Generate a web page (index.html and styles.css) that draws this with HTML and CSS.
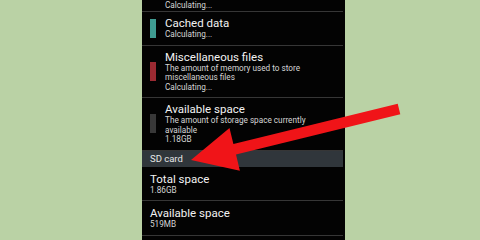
FILE: index.html
```html
<!DOCTYPE html>
<html>
<head>
<meta charset="utf-8">
<link rel="stylesheet" href="styles.css">
</head>
<body>
<div class="page">
  <div class="screen">
    <div class="list">
      <div class="row row-partial">
        <span class="swatch swatch-none"></span>
        <div class="text">
          <div class="desc">Calculating...</div>
        </div>
      </div>
      <div class="row">
        <span class="swatch swatch-teal"></span>
        <div class="text">
          <div class="title">Cached data</div>
          <div class="desc">Calculating...</div>
        </div>
      </div>
      <div class="row">
        <span class="swatch swatch-red"></span>
        <div class="text">
          <div class="title">Miscellaneous files</div>
          <div class="desc">The amount of memory used to store<br>miscellaneous files<br>Calculating...</div>
        </div>
      </div>
      <div class="row">
        <span class="swatch swatch-gray"></span>
        <div class="text">
          <div class="title">Available space</div>
          <div class="desc">The amount of storage space currently<br>available<br>1.18GB</div>
        </div>
      </div>
      <div class="section">SD card</div>
      <div class="row row-plain">
        <div class="text">
          <div class="title">Total space</div>
          <div class="desc">1.86GB</div>
        </div>
      </div>
      <div class="row row-plain">
        <div class="text">
          <div class="title">Available space</div>
          <div class="desc">519MB</div>
        </div>
      </div>
    </div>
  </div>
</div>
<svg class="arrow" width="480" height="240" viewBox="0 0 480 240">
  <polygon points="397.7,103.7 233.4,144.0 229.5,127.9 191,160 239.9,170.7 236.0,154.6 400.3,114.3" fill="#f01418"/>
</svg>
</body>
</html>
```
FILE: styles.css
```css
html, body {
  margin: 0;
  padding: 0;
}
body {
  width: 480px;
  height: 240px;
  overflow: hidden;
  background: #bad2a5;
  font-family: Roboto, "Noto Sans", sans-serif;
  position: relative;
}
.page {
  display: flex;
  padding-left: 142px;
  height: 240px;
}
.screen {
  width: 201px;
  padding-right: 2px;
  height: 240px;
  background: #030303;
  overflow: hidden;
}
.list {
  display: flex;
  flex-direction: column;
}
.row {
  display: flex;
  align-items: center;
  gap: 9px;
  padding: 5px 0 5px 8px;
  border-bottom: 1px solid #363636;
}
.row-partial {
  padding-top: 0;
  padding-bottom: 1px;
}
.row-plain {
  padding-top: 6px;
}
.swatch {
  width: 6px;
  height: 19px;
  flex: none;
}
.swatch-none { background: transparent; height: 6px; }
.swatch-teal { background: #3f9c92; }
.swatch-red { background: #9b2a32; }
.swatch-gray { background: #383838; }
.title {
  font-size: 11.5px;
  line-height: 13px;
  color: #f2f2f2;
}
.desc {
  font-size: 8.2px;
  line-height: 9.5px;
  color: #d6d6d6;
}
.row-partial .desc {
  line-height: 10px;
}
.section {
  background: #30363b;
  color: #e6e6e6;
  font-size: 9.5px;
  line-height: 16px;
  height: 16px;
  padding-left: 8px;
}
.arrow {
  position: absolute;
  left: 0;
  top: 0;
  pointer-events: none;
}
```
